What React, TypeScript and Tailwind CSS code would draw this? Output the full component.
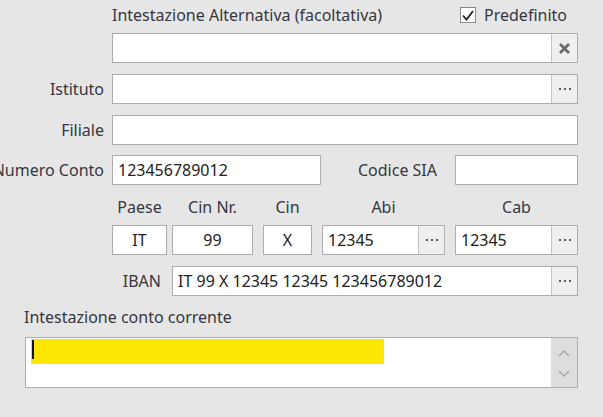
import React from 'react';

const font = "font-['Segoe_UI','Noto_Sans',sans-serif]";

function Dots() {
  return (
    <svg width="12" height="4" viewBox="0 0 12 4">
      <rect x="0" y="1" width="2" height="2" fill="#5a5a5a" />
      <rect x="5" y="1" width="2" height="2" fill="#5a5a5a" />
      <rect x="10" y="1" width="2" height="2" fill="#5a5a5a" />
    </svg>
  );
}

function SideButton({ kind }: { kind: 'dots' | 'clear' }) {
  return (
    <div className="w-[26px] h-full flex items-center justify-center border-l border-[#c4c4c4] bg-[#efefef]">
      {kind === 'dots' ? (
        <Dots />
      ) : (
        <svg width="13" height="13" viewBox="0 0 13 13">
          <path d="M2 2 L11 11 M11 2 L2 11" stroke="#6a6a6a" strokeWidth="2.8" />
        </svg>
      )}
    </div>
  );
}

function Field({
  value = '',
  className = '',
  center = false,
  button,
}: {
  value?: string;
  className?: string;
  center?: boolean;
  button?: 'dots' | 'clear';
}) {
  return (
    <div className={`h-[30px] flex bg-white border border-[#acacac] ${className}`}>
      <div className={`flex-1 flex items-center px-[5px] text-[#222] ${center ? 'justify-center' : ''}`}>{value}</div>
      {button && <SideButton kind={button} />}
    </div>
  );
}

function Label({ text, width = 'w-[104px]' }: { text: string; width?: string }) {
  return (
    <div className={`${width} shrink-0 flex justify-end`}>
      <span className="whitespace-nowrap shrink-0">{text}</span>
    </div>
  );
}

export default function App() {
  return (
    <div className={`w-[603px] h-[417px] overflow-hidden bg-[#e6e6e6] text-[#363640] text-[16px] ${font}`}>
      <div className="w-[578px] flex flex-col pt-[4px]">
        {/* header row */}
        <div className="h-[22px] flex items-center pl-[112px]">
          <span className="whitespace-nowrap">Intestazione Alternativa (facoltativa)</span>
          <div className="ml-auto mr-[11px] flex items-center gap-[8px]">
            <div className="w-[16px] h-[16px] bg-white border border-[#8a8a8a] flex items-center justify-center">
              <svg width="12" height="11" viewBox="0 0 12 11">
                <path d="M1 5.5 L4.5 9.5 L11 1" fill="none" stroke="#222" strokeWidth="1.8" />
              </svg>
            </div>
            <span>Predefinito</span>
          </div>
        </div>

        <div className="mt-[7px] flex">
          <div className="w-[112px] shrink-0" />
          <Field className="flex-1" button="clear" />
        </div>

        <div className="mt-[11px] flex items-center gap-[8px]">
          <Label text="Istituto" />
          <Field className="flex-1" button="dots" />
        </div>

        <div className="mt-[11px] flex items-center gap-[8px]">
          <Label text="Filiale" />
          <Field className="flex-1" />
        </div>

        <div className="mt-[10px] flex items-center">
          <Label text="Numero Conto" />
          <Field className="ml-[8px] w-[209px]" value="123456789012" />
          <div className="flex-1 flex justify-end pr-[18px]">
            <span className="whitespace-nowrap">Codice SIA</span>
          </div>
          <Field className="w-[123px]" />
        </div>

        {/* bank code headers */}
        <div className="mt-[10px] h-[24px] flex items-center pl-[112px]">
          <div className="w-[55px] text-center">Paese</div>
          <div className="ml-[5px] w-[81px] text-center">Cin Nr.</div>
          <div className="ml-[10px] w-[49px] text-center">Cin</div>
          <div className="ml-[10px] w-[123px] text-center">Abi</div>
          <div className="ml-[10px] flex-1 text-center">Cab</div>
        </div>

        <div className="mt-[6px] flex pl-[112px]">
          <Field className="w-[55px]" value="IT" center />
          <Field className="ml-[5px] w-[81px]" value="99" center />
          <Field className="ml-[10px] w-[49px]" value="X" center />
          <Field className="ml-[10px] w-[123px]" value="12345" button="dots" />
          <Field className="ml-[10px] flex-1" value="12345" button="dots" />
        </div>

        <div className="mt-[11px] flex items-center">
          <Label text="IBAN" width="w-[161px]" />
          <Field className="ml-[11px] flex-1" value="IT 99 X 12345 12345 123456789012" button="dots" />
        </div>

        <div className="mt-[10px] h-[22px] flex items-center pl-[24px]">
          <span>Intestazione conto corrente</span>
        </div>

        <div className="mt-[9px] ml-[25px] h-[51px] flex bg-white border border-[#acacac]">
          <div className="flex-1 pl-[5px] pt-px">
            <div className="relative w-[353px] h-[25px] bg-[#ffe600]">
              <div className="absolute left-[1px] top-[1px] w-[2px] h-[19px] bg-[#111]" />
            </div>
          </div>
          <div className="w-[26px] bg-[#dedede] flex flex-col items-center justify-between pt-[11px] pb-[9px]">
            <svg width="12" height="8" viewBox="0 0 12 8">
              <path d="M1 7 L6 2 L11 7" fill="none" stroke="#a8a8a8" strokeWidth="1.5" />
            </svg>
            <svg width="12" height="8" viewBox="0 0 12 8">
              <path d="M1 1 L6 6 L11 1" fill="none" stroke="#a8a8a8" strokeWidth="1.5" />
            </svg>
          </div>
        </div>
      </div>
    </div>
  );
}
